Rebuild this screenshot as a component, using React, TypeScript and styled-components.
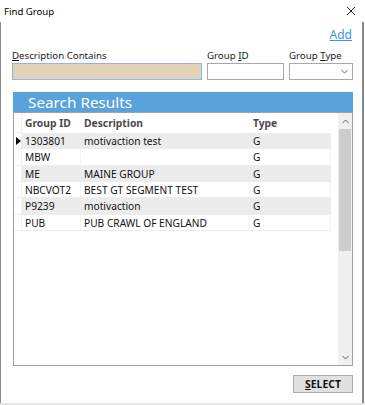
import React from "react";
import styled, { createGlobalStyle } from "styled-components";

const GlobalStyle = createGlobalStyle`
  html, body {
    margin: 0;
    padding: 0;
    background: #ffffff;
  }
  body {
    font-family: "Noto Sans", "Open Sans", sans-serif;
    color: #000;
  }
`;

const Window = styled.div`
  width: 365px;
  height: 405px;
  box-sizing: border-box;
  background: #fff;
  display: flex;
  flex-direction: column;
  overflow: hidden;
  border-bottom: 2px solid #e6e6e6;
`;

const TitleBar = styled.div`
  height: 22px;
  display: flex;
  align-items: center;
  justify-content: space-between;
  padding: 0 9px 0 4px;
  font-size: 9.6px;
  color: #000;
`;

const CloseButton = styled.span`
  display: flex;
  width: 10px;
  height: 10px;
`;

const Body = styled.div`
  flex: 1;
  display: flex;
  flex-direction: column;
  padding: 3px 0 0 11px;
  border-left: 1px solid #8a8a8a;
  border-right: 2px solid #8a8a8a;
  margin-right: 1px;
`;

const Content = styled.div`
  width: 341px;
  display: flex;
  flex-direction: column;
`;

const AddRow = styled.div`
  display: flex;
  justify-content: flex-end;
  height: 20px;
`;

const AddLink = styled.a`
  color: #3d95e6;
  font-size: 12px;
  text-decoration: underline;
  cursor: pointer;
  line-height: 20px;
  margin-right: 1px;
`;

const FieldRow = styled.div`
  display: flex;
  gap: 5px;
  margin-top: 3px;
`;

const Field = styled.div<{ $w: number }>`
  display: flex;
  flex-direction: column;
  width: ${(p) => p.$w}px;
  flex-shrink: 0;
`;

const Label = styled.label`
  font-size: 9.7px;
  color: #1a1a1a;
  height: 15px;
  line-height: 15px;
  white-space: nowrap;
  u {
    text-decoration: underline;
  }
`;

const TextBox = styled.div<{ $focused?: boolean }>`
  height: 17px;
  box-sizing: border-box;
  border: 1px solid ${(p) => (p.$focused ? "#8db8e6" : "#a8a8a8")};
  background: ${(p) => (p.$focused ? "#e4d1b9" : "#fff")};
  display: flex;
  align-items: center;
  justify-content: flex-end;
  padding-right: 4px;
`;

const Panel = styled.div`
  margin: 12px 0 0 1px;
  display: flex;
  flex-direction: column;
  width: 340px;
`;

const PanelHeader = styled.div`
  height: 20px;
  background: #5aa2dc;
  color: #fff;
  font-size: 15.3px;
  line-height: 21px;
  padding-left: 15px;
`;

const GridBox = styled.div`
  border: 1px solid #a0a0a0;
  height: 252px;
  display: flex;
  background: #fff;
`;

const GridArea = styled.div`
  flex: 1;
  display: grid;
  grid-template-columns: 8px 59px 169px 81px;
  grid-auto-rows: 16.33px;
  grid-template-rows: 20px;
  align-content: start;
  margin-right: 6px;
`;

const HeadCell = styled.div`
  font-size: 10.3px;
  font-weight: bold;
  color: #4a4a4a;
  padding-left: 3px;
  line-height: 20px;
  white-space: nowrap;
`;

const Cell = styled.div<{ $alt: boolean }>`
  font-size: 10.2px;
  color: #111;
  padding-left: 3px;
  line-height: 16px;
  white-space: nowrap;
  overflow: hidden;
  box-sizing: border-box;
  background: ${(p) => (p.$alt ? "#ececec" : "#fff")};
  border-bottom: 1px solid ${(p) => (p.$alt ? "#ececec" : "#eeeeee")};
  border-right: 1px solid ${(p) => (p.$alt ? "#ececec" : "#f3f3f3")};
`;

const RowHead = styled.div`
  box-sizing: border-box;
  border-bottom: 1px solid #f0f0f0;
  border-right: 1px solid #f0f0f0;
  display: flex;
  align-items: center;
  justify-content: flex-end;
`;

const ScrollBar = styled.div`
  width: 14px;
  background: #f0f0f0;
  display: flex;
  flex-direction: column;
  align-items: center;
`;

const ScrollArrow = styled.div`
  height: 16px;
  width: 14px;
  display: flex;
  align-items: center;
  justify-content: center;
`;

const Thumb = styled.div`
  width: 12px;
  height: 122px;
  background: #cdcdcd;
`;

const Spacer = styled.div`
  flex: 1;
`;

const Footer = styled.div`
  display: flex;
  justify-content: flex-end;
  margin-top: 9px;
`;

const SelectButton = styled.button`
  width: 60px;
  height: 18px;
  box-sizing: border-box;
  background: #e1e1e1;
  border: 1px solid #adadad;
  font-family: "Noto Sans", sans-serif;
  font-size: 10.4px;
  font-weight: bold;
  color: #111;
  padding: 0;
  line-height: 16px;
  cursor: pointer;
`;

const Chevron: React.FC<{ up?: boolean }> = ({ up }) => (
  <svg width="7" height="5" viewBox="0 0 7 5">
    <path
      d={up ? "M0.5 4 L3.5 1 L6.5 4" : "M0.5 1 L3.5 4 L6.5 1"}
      fill="none"
      stroke="#606060"
      strokeWidth="1"
    />
  </svg>
);

const rows = [
  { id: "1303801", desc: "motivaction test", type: "G" },
  { id: "MBW", desc: "", type: "G" },
  { id: "ME", desc: "MAINE GROUP", type: "G" },
  { id: "NBCVOT2", desc: "BEST GT SEGMENT TEST", type: "G" },
  { id: "P9239", desc: "motivaction", type: "G" },
  { id: "PUB", desc: "PUB CRAWL OF ENGLAND", type: "G" },
];

const App: React.FC = () => {
  return (
    <Window>
      <GlobalStyle />
      <TitleBar>
        <span>Find Group</span>
        <CloseButton>
          <svg width="10" height="10" viewBox="0 0 10 10">
            <path d="M1 1 L9 9 M9 1 L1 9" stroke="#222" strokeWidth="1" />
          </svg>
        </CloseButton>
      </TitleBar>
      <Body>
        <Content>
          <AddRow>
            <AddLink>Add</AddLink>
          </AddRow>
          <FieldRow>
            <Field $w={190}>
              <Label>
                <u>D</u>escription Contains
              </Label>
              <TextBox $focused />
            </Field>
            <Field $w={77}>
              <Label>
                Group <u>I</u>D
              </Label>
              <TextBox />
            </Field>
            <Field $w={64}>
              <Label>
                Group <u>T</u>ype
              </Label>
              <TextBox>
                <Chevron />
              </TextBox>
            </Field>
          </FieldRow>
          <Panel>
            <PanelHeader>Search Results</PanelHeader>
            <GridBox>
              <GridArea>
                <RowHead />
                <HeadCell>Group ID</HeadCell>
                <HeadCell>Description</HeadCell>
                <HeadCell>Type</HeadCell>
                {rows.map((r, i) => (
                  <React.Fragment key={r.id}>
                    <RowHead>
                      {i === 0 && (
                        <svg width="5" height="8" viewBox="0 0 5 8">
                          <path d="M0 0 L5 4 L0 8 Z" fill="#000" />
                        </svg>
                      )}
                    </RowHead>
                    <Cell $alt={i % 2 === 0}>{r.id}</Cell>
                    <Cell $alt={i % 2 === 0}>{r.desc}</Cell>
                    <Cell $alt={i % 2 === 0}>{r.type}</Cell>
                  </React.Fragment>
                ))}
              </GridArea>
              <ScrollBar>
                <ScrollArrow>
                  <Chevron up />
                </ScrollArrow>
                <Thumb />
                <Spacer />
                <ScrollArrow>
                  <Chevron />
                </ScrollArrow>
              </ScrollBar>
            </GridBox>
          </Panel>
          <Footer>
            <SelectButton>
              <u>S</u>ELECT
            </SelectButton>
          </Footer>
        </Content>
      </Body>
    </Window>
  );
};

export default App;
